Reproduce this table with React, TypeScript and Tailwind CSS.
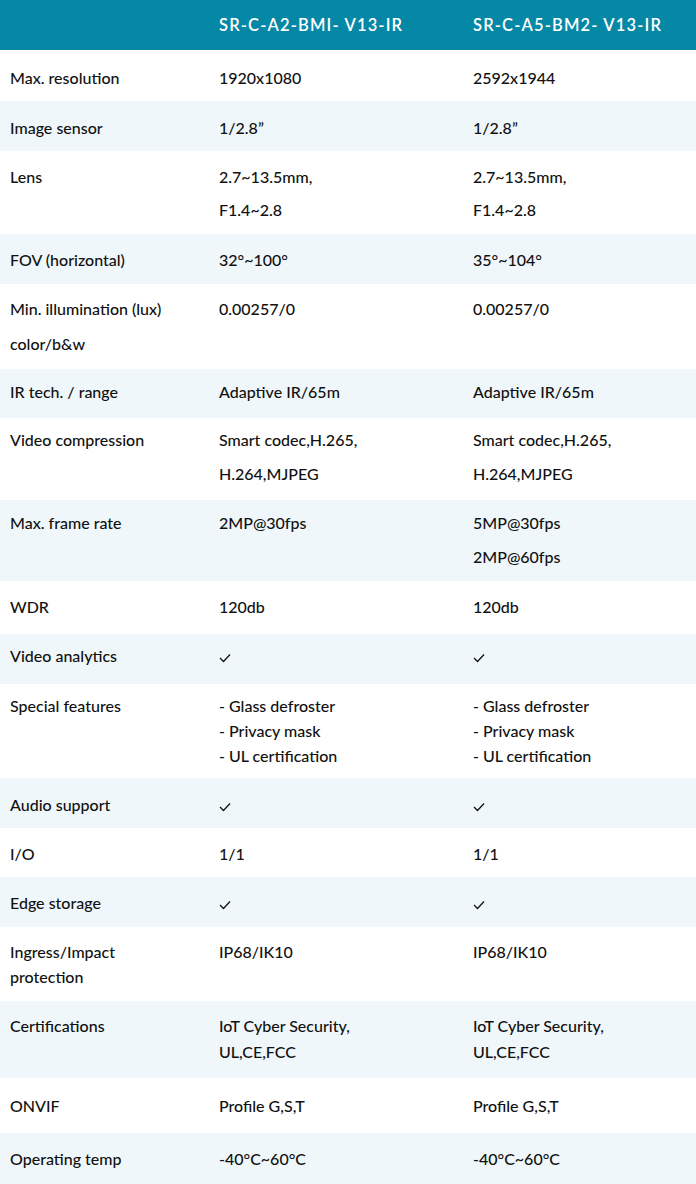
import React from "react";

type Row = {
  label: string[];
  a: string[];
  b: string[];
  h: number;
  pt: number;
  lh: number;
};

const CHECK = "__check__";

const rows: Row[] = [
  { label: ["Max. resolution"], a: ["1920x1080"], b: ["2592x1944"], h: 51, pt: 11, lh: 33 },
  { label: ["Image sensor"], a: ["1/2.8”"], b: ["1/2.8”"], h: 50, pt: 10, lh: 33 },
  { label: ["Lens"], a: ["2.7~13.5mm,", "F1.4~2.8"], b: ["2.7~13.5mm,", "F1.4~2.8"], h: 83, pt: 9, lh: 33 },
  { label: ["FOV (horizontal)"], a: ["32°~100°"], b: ["35°~104°"], h: 50, pt: 9, lh: 33 },
  { label: ["Min. illumination (lux)", "color/b&w"], a: ["0.00257/0"], b: ["0.00257/0"], h: 85, pt: 7, lh: 35 },
  { label: ["IR tech. / range"], a: ["Adaptive IR/65m"], b: ["Adaptive IR/65m"], h: 49, pt: 6, lh: 33 },
  { label: ["Video compression"], a: ["Smart codec,H.265,", "H.264,MJPEG"], b: ["Smart codec,H.265,", "H.264,MJPEG"], h: 82, pt: 5, lh: 34 },
  { label: ["Max. frame rate"], a: ["2MP@30fps"], b: ["5MP@30fps", "2MP@60fps"], h: 81, pt: 6, lh: 34 },
  { label: ["WDR"], a: ["120db"], b: ["120db"], h: 53, pt: 9, lh: 33 },
  { label: ["Video analytics"], a: [CHECK], b: [CHECK], h: 50, pt: 5, lh: 33 },
  { label: ["Special features"], a: ["- Glass defroster", "- Privacy mask", "- UL certification"], b: ["- Glass defroster", "- Privacy mask", "- UL certification"], h: 94, pt: 9, lh: 25 },
  { label: ["Audio support"], a: [CHECK], b: [CHECK], h: 50, pt: 10, lh: 33 },
  { label: ["I/O"], a: ["1/1"], b: ["1/1"], h: 49, pt: 9, lh: 33 },
  { label: ["Edge storage"], a: [CHECK], b: [CHECK], h: 50, pt: 9, lh: 33 },
  { label: ["Ingress/Impact", "protection"], a: ["IP68/IK10"], b: ["IP68/IK10"], h: 74, pt: 12, lh: 25 },
  { label: ["Certifications"], a: ["IoT Cyber Security,", "UL,CE,FCC"], b: ["IoT Cyber Security,", "UL,CE,FCC"], h: 77, pt: 12, lh: 26 },
  { label: ["ONVIF"], a: ["Profile G,S,T"], b: ["Profile G,S,T"], h: 55, pt: 15, lh: 26 },
  { label: ["Operating temp"], a: ["-40°C~60°C"], b: ["-40°C~60°C"], h: 51, pt: 13, lh: 26 },
];

const Check = () => (
  <svg width="12" height="10" viewBox="0 0 12 10" className="inline-block">
    <polyline points="1,5 4.5,8.5 11,1.5" fill="none" stroke="#111" strokeWidth="1.3" />
  </svg>
);

const Cell = ({ lines, pt, lh, w }: { lines: string[]; pt: number; lh: number; w: string }) => (
  <div className={`${w} px-[10px] whitespace-nowrap`} style={{ paddingTop: pt, lineHeight: `${lh}px` }}>
    {lines.map((l, i) => (
      <div key={i}>{l === CHECK ? <Check /> : l}</div>
    ))}
  </div>
);

const App = () => {
  return (
    <div
      className="w-[696px] h-[1184px] overflow-hidden bg-white text-[16px] font-medium text-[#111]"
      style={{ fontFamily: "Lato, 'Noto Sans', sans-serif" }}
    >
      <div className="flex h-[50px] items-center bg-[#0587a6] text-white text-[16.5px] font-semibold tracking-[0.07em]">
        <div className="w-[209px]" />
        <div className="w-[254px] px-[10px]">SR-C-A2-BMI- V13-IR</div>
        <div className="w-[233px] px-[10px]">SR-C-A5-BM2- V13-IR</div>
      </div>
      {rows.map((r, i) => (
        <div
          key={i}
          className={`flex ${i % 2 === 1 ? "bg-[#eff7fa]" : "bg-white"}`}
          style={{ height: r.h }}
        >
          <Cell lines={r.label} pt={r.pt} lh={r.lh} w="w-[209px]" />
          <Cell lines={r.a} pt={r.pt} lh={r.lh} w="w-[254px]" />
          <Cell lines={r.b} pt={r.pt} lh={r.lh} w="w-[233px]" />
        </div>
      ))}
    </div>
  );
};

export default App;
